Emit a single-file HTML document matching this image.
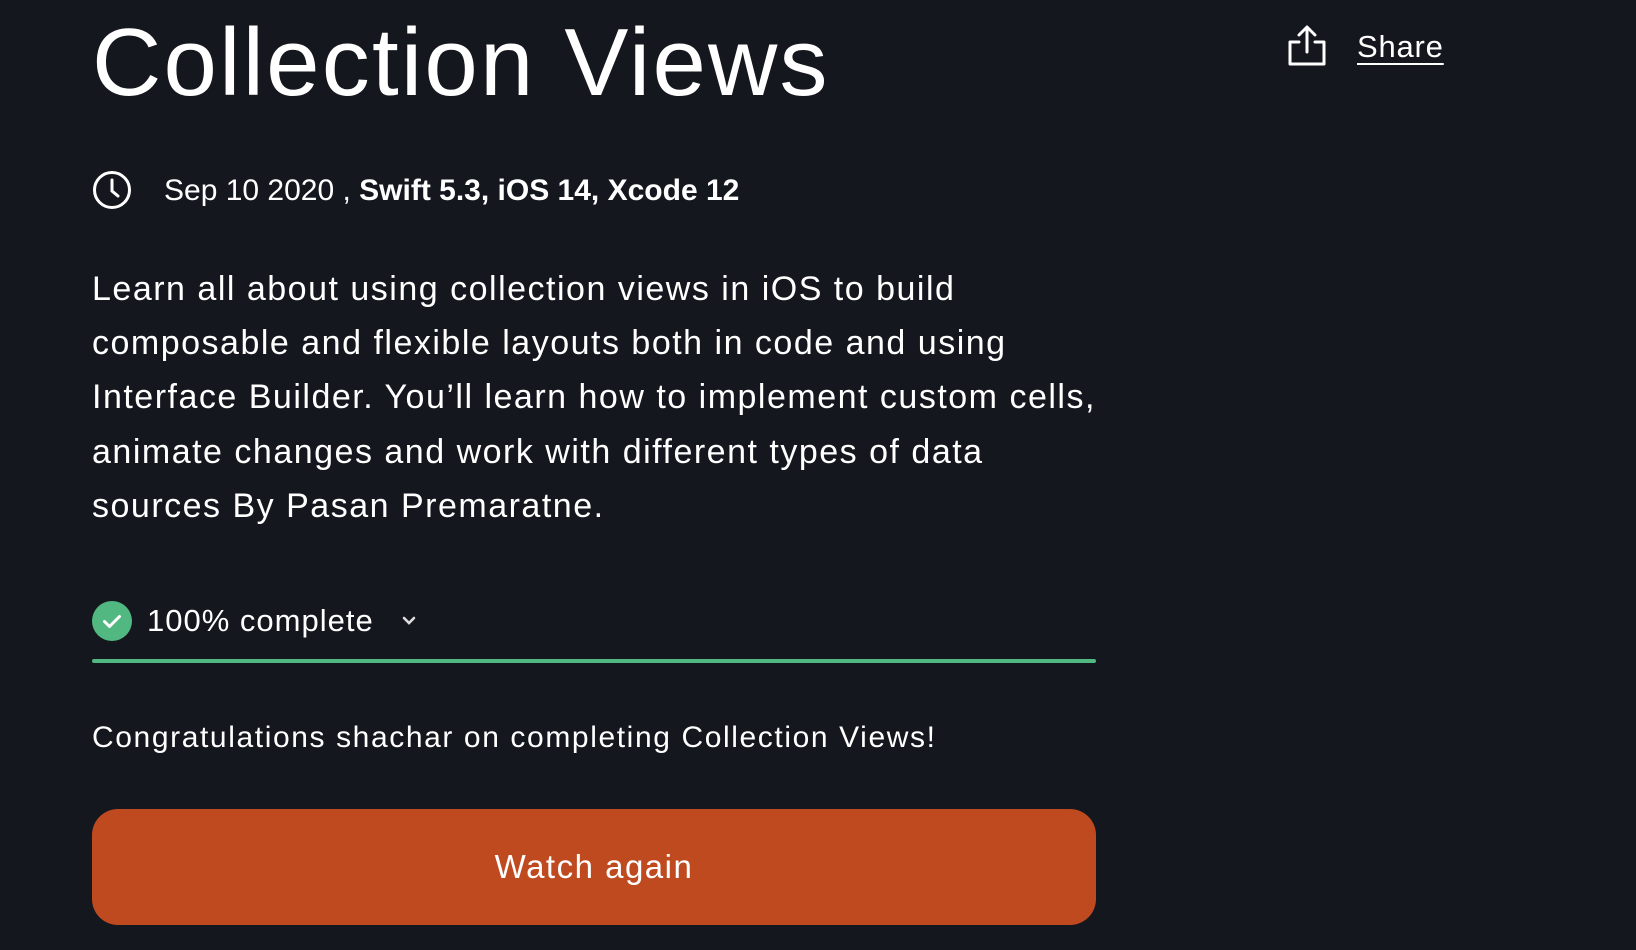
<!DOCTYPE html>
<html><head><meta charset="utf-8"><style>
*{margin:0;padding:0;box-sizing:border-box}
html,body{width:1636px;height:950px;overflow:hidden;background:#14171e;color:#fff;font-family:"Liberation Sans",sans-serif}
.abs{position:absolute}
h1{position:absolute;left:92px;top:8px;font-size:96px;font-weight:400;letter-spacing:2.2px;line-height:110px;white-space:nowrap}
.meta{left:164px;top:171px;font-size:30px;line-height:40px;white-space:nowrap}
.desc{left:92px;top:262px;width:1200px;font-size:34px;line-height:54.2px;letter-spacing:1.5px;white-space:nowrap}
.prog{left:147px;top:601px;font-size:31px;line-height:40px;letter-spacing:1px}
.bar{left:92px;top:659px;width:1004px;height:4px;background:#52b882;border-radius:2px}
.cong{left:92px;top:718px;font-size:30px;line-height:40px;letter-spacing:1.6px;white-space:nowrap}
.btn{left:92px;top:809px;width:1004px;height:116px;background:#bf4a20;border-radius:26px;font-size:33px;letter-spacing:1.5px;display:flex;align-items:center;justify-content:center}
.share{left:1357px;top:29px;font-size:31px;letter-spacing:0.8px;text-decoration:underline;text-underline-offset:6px;text-decoration-thickness:2px}
</style></head><body>
<h1>Collection Views</h1>
<svg class="abs" style="left:92px;top:170px" width="40" height="40" viewBox="0 0 40 40" fill="none" stroke="#fff" stroke-width="3"><circle cx="20" cy="20" r="17.5"/><path d="M20 10v11l6 5" stroke-linecap="round"/></svg>
<div class="abs meta">Sep 10 2020 , <b>Swift 5.3, iOS 14, Xcode 12</b></div>
<div class="abs desc">Learn all about using collection views in iOS to build<br>composable and flexible layouts both in code and using<br>Interface Builder. You’ll learn how to implement custom cells,<br>animate changes and work with different types of data<br>sources By Pasan Premaratne.</div>
<svg class="abs" style="left:92px;top:601px" width="40" height="40" viewBox="0 0 40 40"><circle cx="20" cy="20" r="20" fill="#52b882"/><path d="M12.5 20.5l5 5 10-10" fill="none" stroke="#fff" stroke-width="3" stroke-linecap="round" stroke-linejoin="round"/></svg>
<div class="abs prog">100% complete</div>
<svg class="abs" style="left:401px;top:615px" width="16" height="12" viewBox="0 0 16 12"><path d="M3 3l5 5 5-5" fill="none" stroke="#ddd" stroke-width="2.6" stroke-linecap="round"/></svg>
<div class="abs bar"></div>
<div class="abs cong">Congratulations shachar on completing Collection Views!</div>
<div class="abs btn">Watch again</div>
<svg class="abs" style="left:1287px;top:25px" width="40" height="42" viewBox="0 0 40 42" fill="none" stroke="#fff" stroke-width="3" stroke-linejoin="round" stroke-linecap="round"><path d="M20 3v24M12 10l8-8 8 8"/><path d="M12 17H3v22h34V17h-9"/></svg>
<div class="abs share">Share</div>
</body></html>
